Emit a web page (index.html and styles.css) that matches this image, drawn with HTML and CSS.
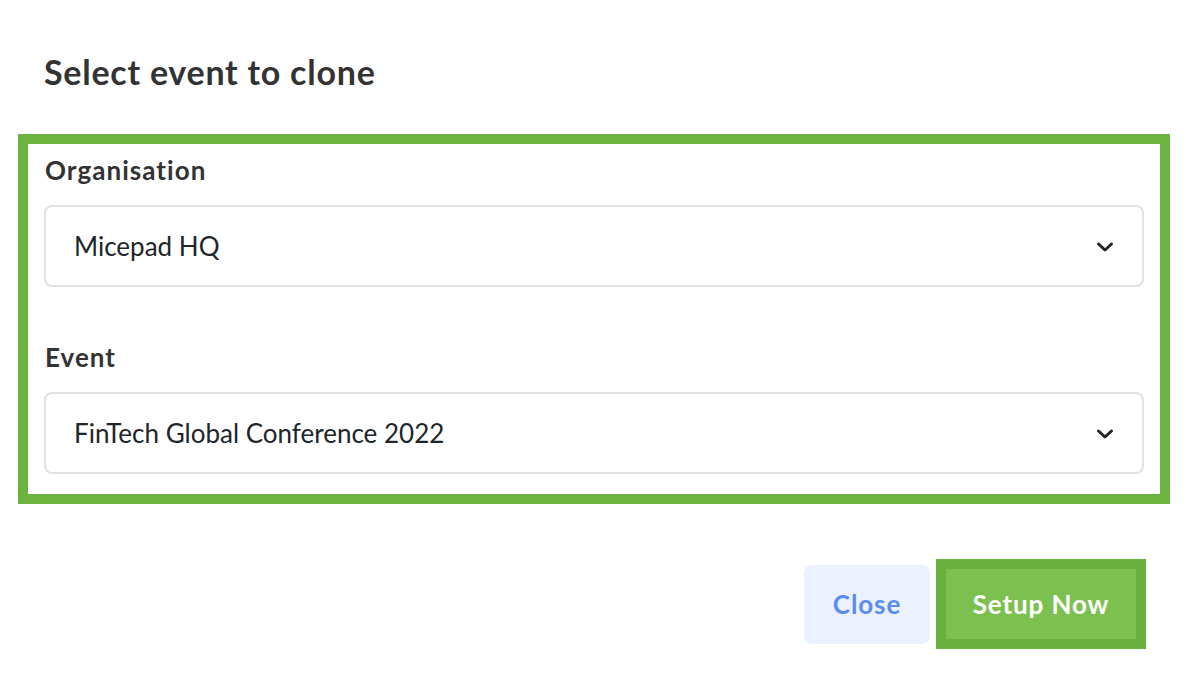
FILE: index.html
```html
<!DOCTYPE html>
<html lang="en">
<head>
<meta charset="utf-8">
<title>Select event to clone</title>
<link rel="stylesheet" href="styles.css">
</head>
<body>
<div class="modal">
  <h1 class="title">Select event to clone</h1>
  <div class="highlight">
    <div class="field">
      <label class="label">Organisation</label>
      <div class="select">
        <span class="select-text">Micepad HQ</span>
        <svg class="chev" width="18" height="12" viewBox="0 0 18 12"><path d="M2.5 3 L9 9 L15.5 3" fill="none" stroke="#1f2329" stroke-width="3" stroke-linecap="round" stroke-linejoin="round"/></svg>
      </div>
    </div>
    <div class="field field-second">
      <label class="label">Event</label>
      <div class="select">
        <span class="select-text">FinTech Global Conference 2022</span>
        <svg class="chev" width="18" height="12" viewBox="0 0 18 12"><path d="M2.5 3 L9 9 L15.5 3" fill="none" stroke="#1f2329" stroke-width="3" stroke-linecap="round" stroke-linejoin="round"/></svg>
      </div>
    </div>
  </div>
  <div class="actions">
    <button class="btn btn-close">Close</button>
    <button class="btn btn-setup">Setup Now</button>
  </div>
</div>
</body>
</html>
```
FILE: styles.css
```css
html, body {
  margin: 0;
  padding: 0;
  background: #ffffff;
}
body {
  font-family: Lato, "Open Sans", sans-serif;
  color: #333333;
  width: 1188px;
  height: 696px;
  overflow: hidden;
}
.modal {
  padding: 0 18px;
}
.title {
  margin: 0;
  padding: 52px 0 0 26px;
  font-size: 34px;
  line-height: 40px;
  font-weight: 700;
  letter-spacing: 0.75px;
  color: #333333;
}
.highlight {
  margin-top: 42px;
  border: 10px solid #6db33f;
  padding: 11px 16px 20px 16px;
}
.field {
  display: flex;
  flex-direction: column;
}
.field-second {
  margin-top: 55px;
}
.label {
  font-size: 26px;
  line-height: 30px;
  font-weight: 700;
  letter-spacing: 1.05px;
  color: #333333;
  padding-left: 1px;
}
.select {
  box-sizing: border-box;
  margin-top: 20px;
  height: 82px;
  border: 2px solid #dfe2e7;
  border-radius: 8px;
  display: flex;
  align-items: center;
  justify-content: space-between;
  padding: 0 28px 0 28px;
}
.select-text {
  font-size: 26px;
  color: #212529;
}
.chev {
  display: block;
  margin-top: 2px;
}
.actions {
  display: flex;
  justify-content: flex-end;
  align-items: center;
  gap: 6px;
  margin-top: 55px;
  padding-right: 24px;
}
.btn {
  font-family: Lato, "Open Sans", sans-serif;
  font-weight: 700;
  font-size: 26px;
  letter-spacing: 0.9px;
  border: none;
  cursor: pointer;
  padding: 0;
}
.btn-close {
  width: 126px;
  height: 79px;
  background: #ebf1fd;
  color: #5a8def;
  border-radius: 8px;
}
.btn-setup {
  width: 210px;
  height: 90px;
  background: #7cc050;
  border: 10px solid #6ab03f;
  color: #ffffff;
}
```
